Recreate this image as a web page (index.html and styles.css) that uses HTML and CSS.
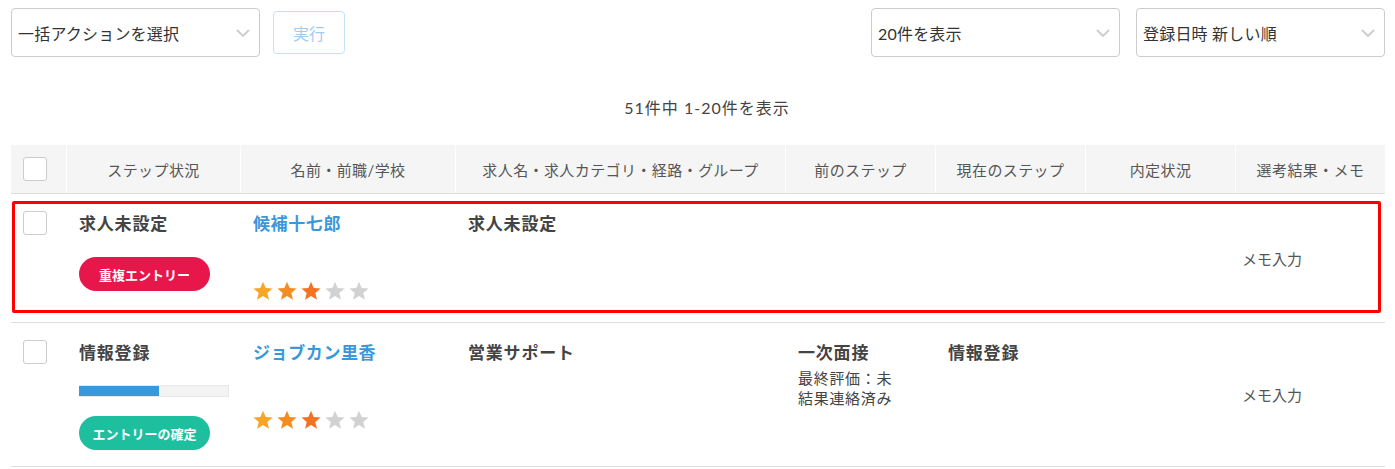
FILE: index.html
```html
<!DOCTYPE html>
<html lang="ja">
<head>
<meta charset="utf-8">
<title>候補者一覧</title>
<link rel="stylesheet" href="styles.css">
</head>
<body>
<div class="page">
  <div class="toolbar">
    <div class="toolbar__group">
      <div class="select">
        <span class="select__label">一括アクションを選択</span>
        <svg class="select__chevron" width="14" height="8" viewBox="0 0 14 8"><polyline points="1,1 7,7 13,1" fill="none" stroke="#cccccc" stroke-width="1.8"/></svg>
      </div>
      <button class="btn-run" type="button">実行</button>
    </div>
    <div class="toolbar__group toolbar__group--right">
      <div class="select">
        <span class="select__label">20件を表示</span>
        <svg class="select__chevron" width="14" height="8" viewBox="0 0 14 8"><polyline points="1,1 7,7 13,1" fill="none" stroke="#cccccc" stroke-width="1.8"/></svg>
      </div>
      <div class="select">
        <span class="select__label">登録日時 新しい順</span>
        <svg class="select__chevron" width="14" height="8" viewBox="0 0 14 8"><polyline points="1,1 7,7 13,1" fill="none" stroke="#cccccc" stroke-width="1.8"/></svg>
      </div>
    </div>
  </div>

  <p class="count">51件中 1-20件を表示</p>

  <div class="table">
    <div class="thead grid-row">
      <div class="th th--check"><span class="checkbox"></span></div>
      <div class="th">ステップ状況</div>
      <div class="th">名前・前職/学校</div>
      <div class="th">求人名・求人カテゴリ・経路・グループ</div>
      <div class="th">前のステップ</div>
      <div class="th">現在のステップ</div>
      <div class="th">内定状況</div>
      <div class="th">選考結果・メモ</div>
    </div>

    <div class="trow trow--first grid-row">
      <div class="td td--check"><span class="checkbox"></span></div>
      <div class="td">
        <div class="title">求人未設定</div>
        <span class="badge badge--red badge--first">重複エントリー</span>
      </div>
      <div class="td">
        <a class="name" href="#">候補十七郎</a>
        <div class="stars">
          <svg class="star" viewBox="0 0 20 20"><polygon fill="#f7a526" points="10,0.8 12.7,7.1 19.6,7.5 14.3,11.9 16,18.8 10,15 4,18.8 5.7,11.9 0.4,7.5 7.3,7.1"/></svg>
          <svg class="star" viewBox="0 0 20 20"><polygon fill="#f58c1f" points="10,0.8 12.7,7.1 19.6,7.5 14.3,11.9 16,18.8 10,15 4,18.8 5.7,11.9 0.4,7.5 7.3,7.1"/></svg>
          <svg class="star" viewBox="0 0 20 20"><polygon fill="#f37321" points="10,0.8 12.7,7.1 19.6,7.5 14.3,11.9 16,18.8 10,15 4,18.8 5.7,11.9 0.4,7.5 7.3,7.1"/></svg>
          <svg class="star" viewBox="0 0 20 20"><polygon fill="#d2d2d2" points="10,0.8 12.7,7.1 19.6,7.5 14.3,11.9 16,18.8 10,15 4,18.8 5.7,11.9 0.4,7.5 7.3,7.1"/></svg>
          <svg class="star" viewBox="0 0 20 20"><polygon fill="#d2d2d2" points="10,0.8 12.7,7.1 19.6,7.5 14.3,11.9 16,18.8 10,15 4,18.8 5.7,11.9 0.4,7.5 7.3,7.1"/></svg>
        </div>
      </div>
      <div class="td"><div class="title">求人未設定</div></div>
      <div class="td"></div>
      <div class="td"></div>
      <div class="td"></div>
      <div class="td td--memo"><span class="memo">メモ入力</span></div>
      <div class="highlight"></div>
    </div>

    <div class="trow grid-row">
      <div class="td td--check"><span class="checkbox"></span></div>
      <div class="td">
        <div class="title">情報登録</div>
        <div class="progress"><div class="progress__fill" style="width:53.7%"></div></div>
        <span class="badge badge--teal">エントリーの確定</span>
      </div>
      <div class="td">
        <a class="name" href="#">ジョブカン里香</a>
        <div class="stars">
          <svg class="star" viewBox="0 0 20 20"><polygon fill="#f7a526" points="10,0.8 12.7,7.1 19.6,7.5 14.3,11.9 16,18.8 10,15 4,18.8 5.7,11.9 0.4,7.5 7.3,7.1"/></svg>
          <svg class="star" viewBox="0 0 20 20"><polygon fill="#f58c1f" points="10,0.8 12.7,7.1 19.6,7.5 14.3,11.9 16,18.8 10,15 4,18.8 5.7,11.9 0.4,7.5 7.3,7.1"/></svg>
          <svg class="star" viewBox="0 0 20 20"><polygon fill="#f37321" points="10,0.8 12.7,7.1 19.6,7.5 14.3,11.9 16,18.8 10,15 4,18.8 5.7,11.9 0.4,7.5 7.3,7.1"/></svg>
          <svg class="star" viewBox="0 0 20 20"><polygon fill="#d2d2d2" points="10,0.8 12.7,7.1 19.6,7.5 14.3,11.9 16,18.8 10,15 4,18.8 5.7,11.9 0.4,7.5 7.3,7.1"/></svg>
          <svg class="star" viewBox="0 0 20 20"><polygon fill="#d2d2d2" points="10,0.8 12.7,7.1 19.6,7.5 14.3,11.9 16,18.8 10,15 4,18.8 5.7,11.9 0.4,7.5 7.3,7.1"/></svg>
        </div>
      </div>
      <div class="td"><div class="title">営業サポート</div></div>
      <div class="td td--step">
        <div class="title">一次面接</div>
        <div class="sub">最終評価：未</div>
        <div class="sub sub--next">結果連絡済み</div>
      </div>
      <div class="td"><div class="title">情報登録</div></div>
      <div class="td"></div>
      <div class="td td--memo"><span class="memo">メモ入力</span></div>
    </div>
  </div>
</div>
</body>
</html>
```

FILE: styles.css
```css
* { box-sizing: border-box; }

html, body {
  margin: 0;
  padding: 0;
  background: #ffffff;
}

body {
  font-family: "Lato", "Noto Sans CJK JP", sans-serif;
  color: #444444;
}

.page {
  padding: 8px 10px 0 11px;
}

/* Toolbar */
.toolbar {
  display: flex;
  justify-content: space-between;
  align-items: center;
  height: 49px;
}

.toolbar__group {
  display: flex;
  align-items: center;
  gap: 13px;
}

.toolbar__group--right {
  gap: 16px;
}

.select {
  position: relative;
  width: 249px;
  height: 49px;
  border: 1px solid #cccccc;
  border-radius: 4px;
  display: flex;
  align-items: center;
  padding: 0 30px 0 6px;
  background: #ffffff;
}

.select__label {
  font-size: 16px;
  letter-spacing: 0.2px;
  color: #333333;
  white-space: nowrap;
}

.select__chevron {
  position: absolute;
  right: 9px;
  top: 50%;
  margin-top: -4px;
}

.btn-run {
  width: 72px;
  height: 43px;
  border: 1px solid #c3e2f6;
  border-radius: 4px;
  background: #ffffff;
  color: #9fcdef;
  font-family: "Lato", "Noto Sans CJK JP", sans-serif;
  font-size: 16px;
  padding: 0;
}

/* Count */
.count {
  margin: 39px 0 25px;
  padding-left: 18px;
  text-align: center;
  font-size: 16px;
  letter-spacing: 1px;
  line-height: 24px;
  color: #444444;
}

/* Table */
.grid-row {
  display: grid;
  grid-template-columns: 55px 173px 214px 329px 149px 149px 149px 149px;
  column-gap: 1px;
}

.thead {
  border-bottom: 1px solid #dddddd;
}

.th {
  height: 48px;
  background: #f5f5f5;
  display: flex;
  align-items: center;
  justify-content: center;
  font-size: 15px;
  letter-spacing: 0.4px;
  color: #555555;
  white-space: nowrap;
}

.th--check {
  justify-content: flex-start;
  padding-left: 12px;
}

.checkbox {
  display: block;
  width: 24px;
  height: 24px;
  border: 1px solid #cccccc;
  border-radius: 3px;
  background: #ffffff;
}

.trow {
  position: relative;
  border-bottom: 1px solid #dddddd;
}

.trow--first {
  min-height: 129px;
}

.td {
  padding: 18px 12px 16px;
  display: flex;
  flex-direction: column;
  align-items: flex-start;
}

.td--check {
  padding-top: 17px;
}

.td--memo {
  justify-content: center;
  padding-left: 6px;
  padding-top: 0;
  padding-bottom: 0;
}

.title {
  font-size: 17px;
  letter-spacing: 0.8px;
  line-height: 24px;
  font-weight: 700;
  color: #444444;
  white-space: nowrap;
}

.name {
  font-size: 17px;
  letter-spacing: 0.6px;
  line-height: 24px;
  font-weight: 700;
  color: #3a98da;
  text-decoration: none;
  white-space: nowrap;
}

.stars {
  display: flex;
  gap: 4px;
  margin-top: 45px;
}

.star {
  display: block;
  width: 20px;
  height: 20px;
}

.badge {
  display: inline-flex;
  align-items: center;
  justify-content: center;
  width: 131px;
  height: 34px;
  border-radius: 17px;
  color: #ffffff;
  font-size: 13px;
  font-weight: 700;
  white-space: nowrap;
  margin-top: 19px;
}

.badge--first {
  margin-top: 21px;
}

.badge--red {
  background: #e8174b;
}

.badge--teal {
  background: #1dbf9f;
}

.progress {
  width: 150px;
  height: 12px;
  margin-top: 20px;
  background: #f3f3f3;
  border: 1px solid #e8e8e8;
  border-left: 0;
  border-radius: 1px;
  overflow: hidden;
}

.progress__fill {
  height: 100%;
  background: #3a98da;
}

.sub {
  margin-top: 3px;
  font-size: 15px;
  letter-spacing: 0.7px;
  line-height: 20px;
  color: #444444;
  white-space: nowrap;
}

.sub--next {
  margin-top: 0;
}

.memo {
  font-size: 15px;
  color: #555555;
}

.highlight {
  position: absolute;
  top: 7px;
  left: 1px;
  right: 4px;
  bottom: 9px;
  border: 3px solid #ff0000;
  border-radius: 2px;
  pointer-events: none;
}
```
